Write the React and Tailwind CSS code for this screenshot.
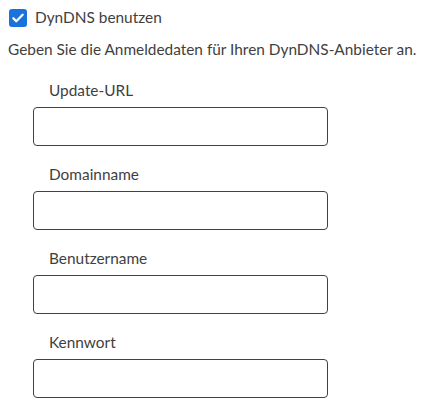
import React from 'react'

const fields = ['Update-URL', 'Domainname', 'Benutzername', 'Kennwort']

const Field = ({ label }) => (
  <div className="mb-[16px]">
    <label className="block h-[24px] leading-[24px] pl-[16px] mb-[5px] text-[15.4px] text-[#3f3f3f]">
      {label}
    </label>
    <input
      type="text"
      className="block w-[295px] h-[39px] px-3 bg-white border border-[#3d4148] rounded-[4px] outline-none"
    />
  </div>
)

export default function App() {
  return (
    <div className="w-[427px] h-[414px] bg-white pt-[6px] pl-[9px] font-['Lato','Noto_Sans',sans-serif] text-[#3f3f3f]">
      <label className="flex items-center h-[24px] gap-[8px]">
        <span className="flex items-center justify-center w-[18px] h-[18px] rounded-[3px] bg-[#1a73d9]">
          <svg width="14" height="14" viewBox="0 0 24 24" fill="none" stroke="white" strokeWidth="3.8" strokeLinecap="round" strokeLinejoin="round">
            <path d="M4 12.5l5 5L20 6.5" />
          </svg>
        </span>
        <span className="text-[15.4px]">DynDNS benutzen</span>
      </label>
      <p className="mt-[7px] -ml-[1px] h-[24px] leading-[24px] text-[15.4px] whitespace-nowrap">
        Geben Sie die Anmeldedaten für Ihren DynDNS-Anbieter an.
      </p>
      <div className="mt-[17px] pl-[24px]">
        {fields.map((f) => (
          <Field key={f} label={f} />
        ))}
      </div>
    </div>
  )
}
